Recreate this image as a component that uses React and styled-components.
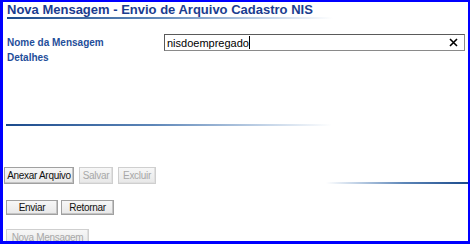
import React from "react";
import styled, { createGlobalStyle } from "styled-components";

const Global = createGlobalStyle`
  html, body { margin: 0; padding: 0; background: #fff; }
  body { font-family: "Liberation Sans", Arial, sans-serif; }
`;

const Frame = styled.div`
  box-sizing: border-box;
  width: 470px;
  height: 244px;
  overflow: hidden;
  border-style: solid;
  border-color: #0000ff;
  border-width: 2px 2px 3px 3px;
  background: #fff;
  display: flex;
  flex-direction: column;
`;

const Header = styled.div`
  flex: none;
  padding-left: 4px;
`;

const Title = styled.h1`
  margin: 0;
  font-size: 13px;
  line-height: 15px;
  font-weight: bold;
  color: #1b3d8f;
`;

const Rule = styled.div`
  flex: none;
  height: 2px;
  width: ${(p) => p.$w}px;
  background: linear-gradient(
    ${(p) => (p.$reverse ? "to left" : "to right")},
    #1b4a8c 0%,
    #5d86b8 45%,
    #c5d5e8 80%,
    rgba(255, 255, 255, 0) 100%
  );
`;

const Form = styled.div`
  flex: none;
  display: grid;
  grid-template-columns: 157px 301px;
  grid-template-rows: 17px 14px;
  align-items: center;
  padding-left: 4px;
  margin-top: 15px;
`;

const Label = styled.div`
  font-size: 10px;
  font-weight: bold;
  color: #1f4e9a;
  line-height: 14px;
  white-space: nowrap;
`;

const InputBox = styled.div`
  box-sizing: border-box;
  height: 17px;
  display: flex;
  align-items: center;
  border: 1px solid #8a8a8a;
  border-top-color: #5a5a5a;
  border-left-color: #5a5a5a;
  padding: 0 6px 0 2px;
  font-size: 11px;
  color: #000;
`;

const Value = styled.span`
  flex: 1;
  display: flex;
  align-items: center;
`;

const Caret = styled.span`
  display: inline-block;
  width: 1px;
  height: 13px;
  background: #000;
`;

const Details = styled.div`
  flex: none;
  height: 59px;
`;

const Divider = styled.div`
  flex: none;
  padding-left: 3px;
`;

const ButtonRow = styled.div`
  flex: none;
  display: flex;
  align-items: flex-end;
  gap: ${(p) => p.$gap || 5}px;
  padding-left: ${(p) => p.$pl || 3}px;
  margin-top: ${(p) => p.$mt}px;
`;

const Button = styled.button`
  flex: none;
  box-sizing: border-box;
  height: ${(p) => p.$h || 17}px;
  width: ${(p) => p.$w}px;
  padding: 0;
  white-space: nowrap;
  font-family: "Liberation Sans", Arial, sans-serif;
  font-size: 10px;
  letter-spacing: -0.3px;
  color: ${(p) => (p.disabled ? "#a8a8a8" : "#111")};
  background: linear-gradient(#f7f7f7, #e8e8e8);
  border: 1px solid ${(p) => (p.disabled ? "#cfcfcf" : "#a0a0a0")};
  box-shadow: inset -1px -1px 0 ${(p) => (p.disabled ? "#e0e0e0" : "#c4c4c4")};
`;

const Spacer = styled.div`
  flex: 1;
`;

export default function App() {
  return (
    <>
      <Global />
      <Frame>
        <Header>
          <Title>Nova Mensagem - Envio de Arquivo Cadastro NIS</Title>
          <Rule $w={326} />
        </Header>
        <Form>
          <Label>Nome da Mensagem</Label>
          <InputBox>
            <Value>
              nisdoempregado
              <Caret />
            </Value>
            <svg width="9" height="9" viewBox="0 0 9 9">
              <path d="M1 1 L8 8 M8 1 L1 8" stroke="#000" strokeWidth="1.6" />
            </svg>
          </InputBox>
          <Label>Detalhes</Label>
          <div />
        </Form>
        <Details />
        <Divider>
          <Rule $w={326} />
        </Divider>
        <ButtonRow $mt={41} $pl={1}>
          <Button $w={70}>Anexar Arquivo</Button>
          <Button $w={34} disabled>Salvar</Button>
          <Button $w={38} disabled>Excluir</Button>
          <Spacer />
          <Rule $w={142} $reverse />
        </ButtonRow>
        <ButtonRow $mt={16} $pl={3} $gap={3}>
          <Button $w={52} $h={15}>Enviar</Button>
          <Button $w={53} $h={15}>Retornar</Button>
        </ButtonRow>
        <ButtonRow $mt={14} $pl={3}>
          <Button $w={83} disabled>Nova Mensagem</Button>
        </ButtonRow>
      </Frame>
    </>
  );
}
